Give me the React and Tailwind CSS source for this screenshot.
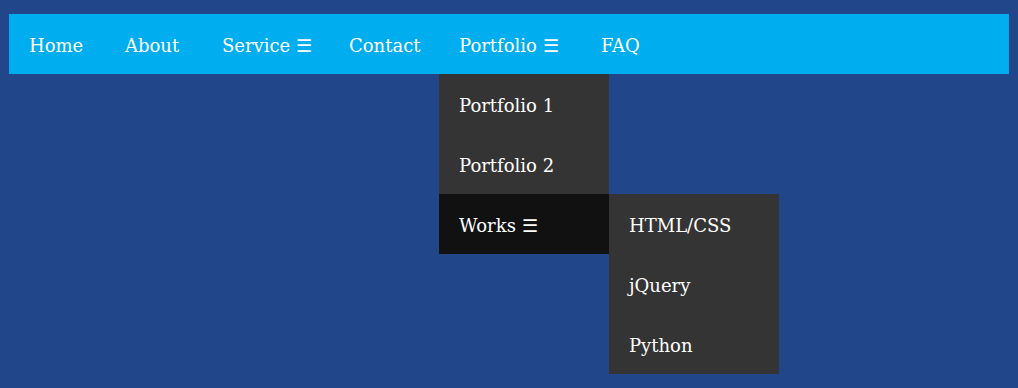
import React from 'react';

// Top-level menu items, widths taken from the layout
const NAV_ITEMS = [
  { label: 'Home', w: 'w-[96px]' },
  { label: 'About', w: 'w-[97px]' },
  { label: 'Service ☰', w: 'w-[127px]' },
  { label: 'Contact', w: 'w-[110px]' },
  { label: 'Portfolio ☰', w: 'w-[142px]', open: true },
  { label: 'FAQ', w: 'w-[82px]' },
];

const PORTFOLIO_ITEMS = ['Portfolio 1', 'Portfolio 2'];
const WORKS_ITEMS = ['HTML/CSS', 'jQuery', 'Python'];

function MenuRow({ children, className = '' }) {
  return (
    <div className={`h-[60px] flex items-center px-5 pt-[2px] whitespace-nowrap ${className}`}>
      {children}
    </div>
  );
}

function Dropdown() {
  return (
    <div className="absolute left-0 top-[60px] w-[170px] bg-[#343434]">
      {PORTFOLIO_ITEMS.map((item) => (
        <MenuRow key={item}>{item}</MenuRow>
      ))}
      <div className="relative">
        <MenuRow className="bg-[#111111]">Works ☰</MenuRow>
        {/* Works submenu */}
        <div className="absolute left-[170px] top-0 w-[170px] bg-[#343434]">
          {WORKS_ITEMS.map((item) => (
            <MenuRow key={item}>{item}</MenuRow>
          ))}
        </div>
      </div>
    </div>
  );
}

export default function App() {
  return (
    <div
      className="w-[1018px] h-[388px] bg-[#21468a] pt-[14px] px-[9px] text-white text-[18px]"
      style={{ fontFamily: '"DejaVu Serif", "Liberation Serif", serif' }}
    >
      <nav className="flex h-[60px] bg-[#00adef]">
        {NAV_ITEMS.map((item) => (
          <div key={item.label} className={`relative ${item.w}`}>
            <MenuRow>{item.label}</MenuRow>
            {item.open && <Dropdown />}
          </div>
        ))}
      </nav>
    </div>
  );
}
